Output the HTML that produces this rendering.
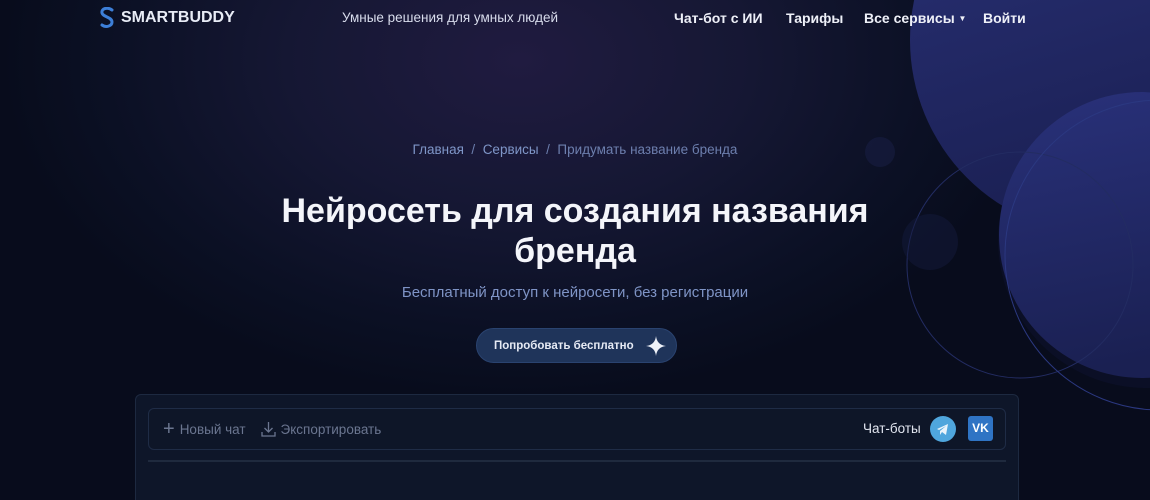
<!DOCTYPE html>
<html style="width:1150px;height:500px;overflow:hidden"><head><meta charset="utf-8"><style>
*{margin:0;padding:0;box-sizing:border-box}
body{width:1150px;height:500px;overflow:hidden;position:relative;font-family:"Liberation Sans",sans-serif;
background:radial-gradient(ellipse 520px 340px at 520px 60px,#201b40 0%,#151733 45%,#0b1024 80%,#080c1c 100%);color:#fff}
.abs{position:absolute}
.nav{font-size:14px;font-weight:bold;color:#eef0f8;top:10px}
</style></head><body>
<svg class="abs" style="left:0;top:0" width="1150" height="500">
<defs>
<linearGradient id="g1" x1="0" y1="0" x2="0.3" y2="1"><stop offset="0" stop-color="#2a3278"/><stop offset="1" stop-color="#1a1f52"/></linearGradient>
<linearGradient id="g2" x1="0" y1="0" x2="0.2" y2="1"><stop offset="0" stop-color="#29317a"/><stop offset="1" stop-color="#1a2052"/></linearGradient>
</defs>
<circle cx="1105" cy="40" r="195" fill="url(#g1)"/>
<circle cx="1146" cy="240" r="148" fill="#0d1230" opacity="0.5"/>
<circle cx="1142" cy="235" r="143" fill="url(#g2)"/>
<circle cx="1020" cy="265" r="113" fill="none" stroke="#232c62" stroke-width="1"/>
<circle cx="1160" cy="255" r="155" fill="none" stroke="#2b3880" stroke-width="1"/>
<circle cx="880" cy="152" r="15" fill="#1a2048" opacity="0.5"/>
<circle cx="930" cy="242" r="28" fill="#141a3c" opacity="0.5"/>
</svg>
<div class="abs" style="left:98px;top:7px;font-size:16px;font-weight:bold;color:#e8ecf6;display:flex;align-items:center">
<svg width="18" height="22" viewBox="0 0 18 22"><path d="M14 3C10 0 3 1 4 6c1 4 10 4 10 9 0 4-6 6-10 3" fill="none" stroke="#3d7fd8" stroke-width="3" stroke-linecap="round"/></svg>
<span style="margin-left:5px">SMARTBUDDY</span></div>
<div class="abs" style="left:342px;top:10px;font-size:13.5px;color:#d8dcec">Умные решения для умных людей</div>
<div class="abs nav" style="left:674px">Чат-бот с ИИ</div>
<div class="abs nav" style="left:786px">Тарифы</div>
<div class="abs nav" style="left:864px">Все сервисы <span style="font-size:8px;vertical-align:2px">▼</span></div>
<div class="abs nav" style="left:983px">Войти</div>
<div class="abs" style="left:0;width:1150px;top:142px;text-align:center;font-size:13.5px;color:#6d7fae">
<span style="color:#7f96c8">Главная</span> &nbsp;/&nbsp; <span style="color:#7f96c8">Сервисы</span> &nbsp;/&nbsp; Придумать название бренда</div>
<div class="abs" style="left:0;width:1150px;top:191px;text-align:center;font-size:34px;font-weight:bold;line-height:40px;color:#f4f5fa">Нейросеть для создания названия<br>бренда</div>
<div class="abs" style="left:0;width:1150px;top:284px;text-align:center;font-size:15px;color:#7f94c6">Бесплатный доступ к нейросети, без регистрации</div>
<div class="abs" style="left:476px;top:328px;width:201px;height:35px;border-radius:18px;background:#1f345a;border:1px solid #2a4370;display:flex;align-items:center;padding-left:17px;font-size:11.5px;font-weight:bold;color:#e6eaf4">Попробовать бесплатно
<svg style="margin-left:12px" width="20" height="20" viewBox="0 0 20 20"><path d="M10 0Q11 9 20 10Q11 11 10 20Q9 11 0 10Q9 9 10 0Z" fill="#eef1f8"/></svg></div>
<div class="abs" style="left:135px;top:394px;width:884px;height:120px;background:#0e1629;border:1px solid #1d2940;border-radius:6px"></div>
<div class="abs" style="left:148px;top:408px;width:858px;height:42px;border:1px solid #1f2c46;border-radius:6px;background:#0e1628"></div>
<div class="abs" style="left:148px;top:460px;width:858px;height:2px;background:#1f2a3e"></div>
<div class="abs" style="left:163px;top:421px;font-size:13.5px;color:#6b7690;display:flex;align-items:center">
<span style="font-size:20px;line-height:16px;margin-right:5px">+</span>Новый чат
<svg style="margin-left:15px;margin-right:5px" width="15" height="16" viewBox="0 0 15 16"><path d="M7.5 1v10M3.5 7l4 4 4-4M1 11v4h13v-4" fill="none" stroke="#6b7690" stroke-width="1.3"/></svg>Экспортировать</div>
<div class="abs" style="left:863px;top:421px;font-size:13.5px;color:#e2e6f0">Чат-боты</div>
<div class="abs" style="left:930px;top:416px;width:26px;height:26px;border-radius:50%;background:#4fa6dd"><svg width="26" height="26" viewBox="0 0 26 26"><path d="M7 13l11-5-2 11-4-3-2 3v-4l6-5-7 4z" fill="#eaf4fb"/></svg></div>
<div class="abs" style="left:968px;top:416px;width:25px;height:25px;border-radius:3px;background:#2f74c4;color:#fff;font-weight:bold;font-size:12px;text-align:center;line-height:25px">VK</div>
</body></html>
